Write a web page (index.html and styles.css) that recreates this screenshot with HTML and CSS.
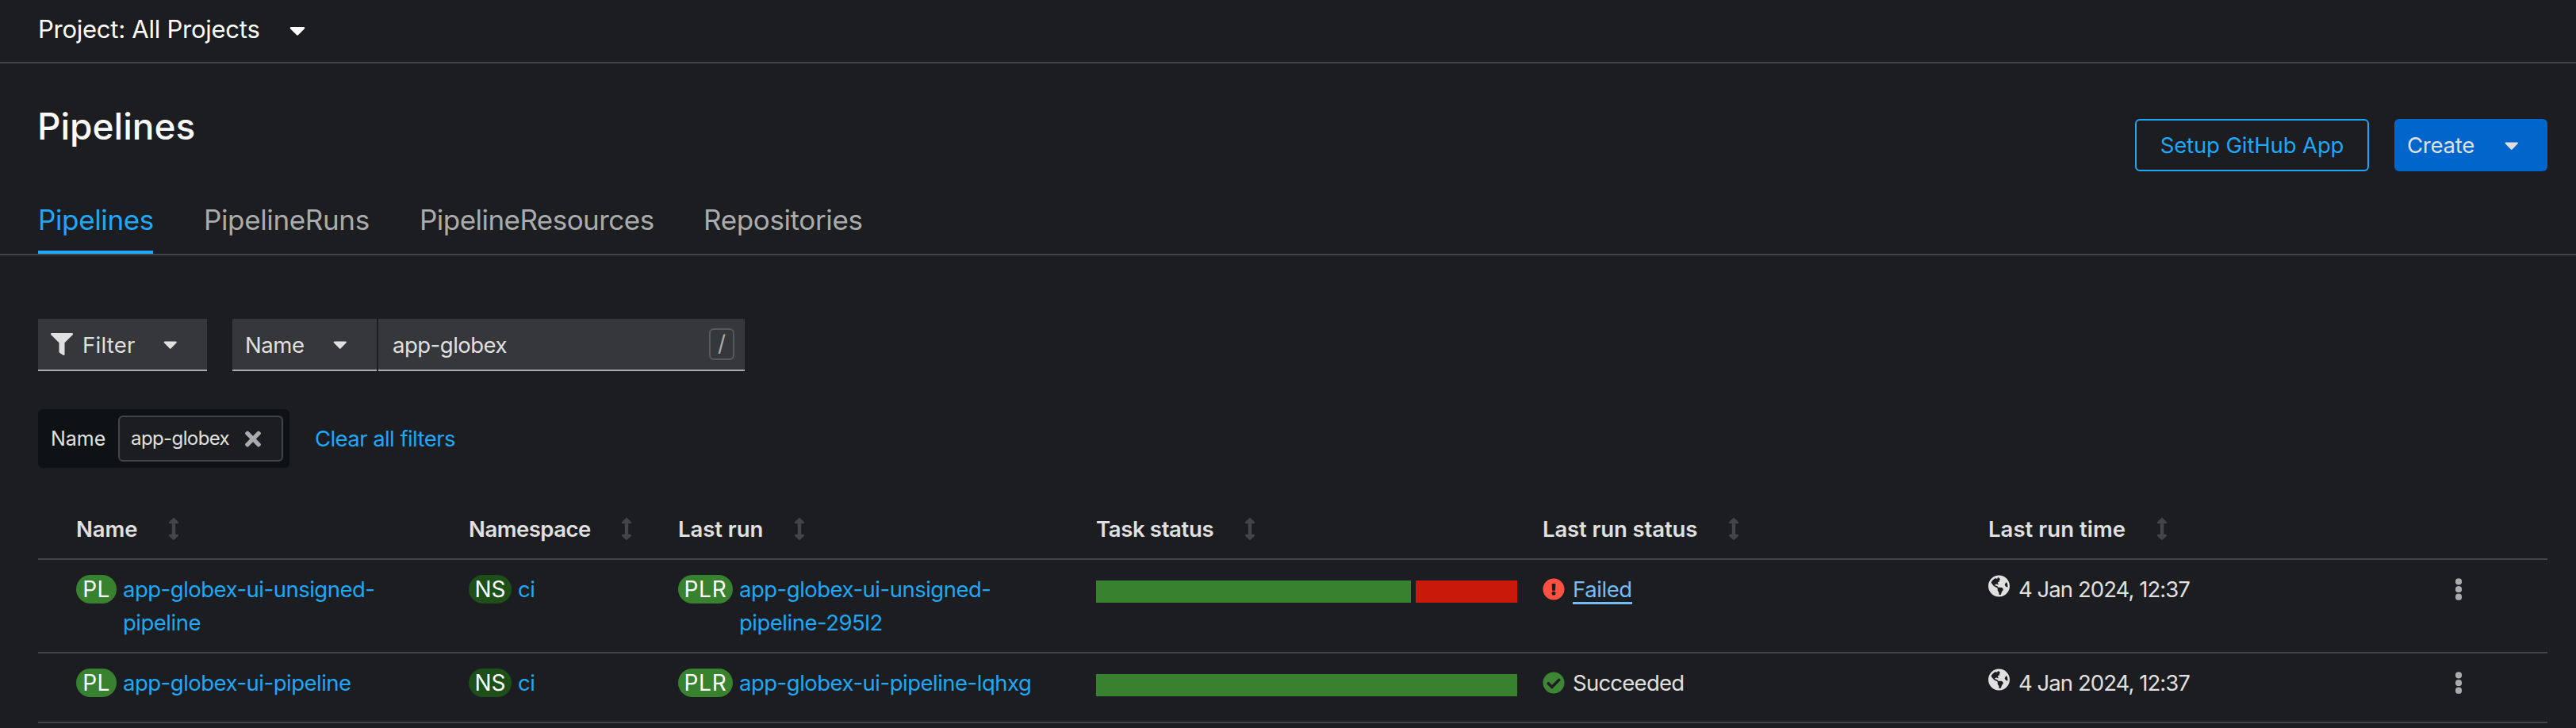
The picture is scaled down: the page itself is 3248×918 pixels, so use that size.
FILE: index.html
```
<!DOCTYPE html>
<html lang="en">
<head>
<meta charset="utf-8">
<title>Pipelines</title>
<link rel="stylesheet" href="styles.css">
</head>
<body>
<svg width="0" height="0" class="sprite" aria-hidden="true">
  <symbol id="caret" viewBox="0 0 320 512"><path d="M31.3 192h257.3c17.8 0 26.7 21.5 14.1 34.1L174.1 354.8c-7.8 7.8-20.5 7.8-28.3 0L17.2 226.1C4.6 213.5 13.5 192 31.3 192z"/></symbol>
  <symbol id="filter" viewBox="0 0 512 512"><path d="M487.976 0H24.028C2.71 0-8.047 25.866 7.058 40.971L192 225.941V432c0 7.831 3.821 15.17 10.237 19.662l80 55.98C298.02 518.69 320 507.493 320 487.98V225.941l184.947-184.97C520.021 25.896 509.338 0 487.976 0z"/></symbol>
  <symbol id="times" viewBox="0 0 352 512"><path d="M242.72 256l100.07-100.07c12.28-12.28 12.28-32.19 0-44.48l-22.24-22.24c-12.28-12.28-32.19-12.28-44.48 0L176 189.28 75.93 89.21c-12.28-12.28-32.19-12.28-44.48 0L9.21 111.45c-12.28 12.28-12.28 32.19 0 44.48L109.28 256 9.21 356.07c-12.28 12.28-12.28 32.19 0 44.48l22.24 22.24c12.28 12.28 32.2 12.28 44.48 0L176 322.72l100.07 100.07c12.28 12.28 32.2 12.28 44.48 0l22.24-22.24c12.28-12.28 12.28-32.19 0-44.48L242.72 256z"/></symbol>
  <symbol id="sort" viewBox="0 0 256 512"><path d="M214.059 377.941H168V134.059h46.059c21.382 0 32.09-25.851 16.971-40.971L144.971 7.029c-9.373-9.373-24.568-9.373-33.941 0L24.971 93.088c-15.119 15.119-4.411 40.971 16.971 40.971H88v243.882H41.941c-21.382 0-32.09 25.851-16.971 40.971l86.059 86.059c9.373 9.373 24.568 9.373 33.941 0l86.059-86.059c15.12-15.119 4.412-40.97-16.97-40.97z"/></symbol>
  <symbol id="failed" viewBox="0 0 512 512"><path d="M504 256c0 136.997-111.043 248-248 248S8 392.997 8 256C8 119.083 119.043 8 256 8s248 111.083 248 248zm-248 50c-25.405 0-46 20.595-46 46s20.595 46 46 46 46-20.595 46-46-20.595-46-46-46zm-43.673-165.346l7.418 136c.347 6.364 5.609 11.346 11.982 11.346h48.546c6.373 0 11.635-4.982 11.982-11.346l7.418-136c.375-6.874-5.098-12.654-11.982-12.654h-63.383c-6.884 0-12.356 5.78-11.981 12.654z"/></symbol>
  <symbol id="ok" viewBox="0 0 512 512"><path d="M504 256c0 136.967-111.033 248-248 248S8 392.967 8 256 119.033 8 256 8s248 111.033 248 248zM227.314 387.314l184-184c6.248-6.248 6.248-16.379 0-22.627l-22.627-22.627c-6.248-6.249-16.379-6.249-22.628 0L216 308.118l-70.059-70.059c-6.248-6.248-16.379-6.248-22.628 0l-22.627 22.627c-6.248 6.248-6.248 16.379 0 22.627l104 104c6.249 6.249 16.379 6.249 22.628.001z"/></symbol>
  <symbol id="globe" viewBox="0 0 496 512"><path d="M248 8C111.03 8 0 119.03 0 256s111.03 248 248 248 248-111.03 248-248S384.97 8 248 8zm82.29 357.6c-3.9 3.88-7.99 7.95-11.31 11.28-2.99 3-5.1 6.7-6.17 10.71-1.51 5.66-2.73 11.38-4.77 16.87l-17.39 46.85c-13.76 3-28 4.69-42.65 4.69v-27.38c1.69-12.62-7.64-36.26-22.63-51.25-6-6-9.37-14.14-9.37-22.63v-32.01c0-11.64-6.27-22.34-16.46-27.97-14.37-7.95-34.81-19.06-48.81-26.11-11.48-5.78-22.1-13.14-31.65-21.75l-.8-.72a114.792 114.792 0 0 1-18.06-20.74c-9.38-13.77-24.66-36.42-34.59-51.14 20.47-45.5 57.36-82.04 103.2-101.89l24.01 12.01C203.48 89.74 216 82.01 216 70.11v-11.3c7.99-1.29 16.12-2.11 24.39-2.42l28.3 28.3c6.25 6.25 6.25 16.38 0 22.63L264 112l-10.34 10.34c-3.12 3.12-3.12 8.19 0 11.31l4.69 4.69c3.12 3.12 3.12 8.19 0 11.31l-8 8a8.008 8.008 0 0 1-5.66 2.34h-8.99c-2.08 0-4.08.81-5.58 2.27l-9.92 9.65a8.008 8.008 0 0 0-1.58 9.31l15.59 31.19c2.66 5.32-1.21 11.58-7.15 11.58h-5.64c-1.93 0-3.79-.7-5.24-1.96l-9.28-8.06a16.017 16.017 0 0 0-15.55-3.1l-31.17 10.39a11.95 11.95 0 0 0-8.17 11.34c0 4.53 2.56 8.66 6.61 10.69l11.08 5.54c9.41 4.71 19.79 7.16 30.31 7.16s22.59 27.29 32 32h66.75c8.49 0 16.62 3.37 22.63 9.37l13.69 13.69a30.503 30.503 0 0 1 8.93 21.57 46.536 46.536 0 0 1-13.72 32.98zM417 274.25c-5.79-1.45-10.84-5-14.15-9.97l-17.98-26.97a23.97 23.97 0 0 1 0-26.62l19.59-29.38c2.32-3.47 5.5-6.29 9.24-8.15l12.98-6.49C440.2 193.59 448 223.87 448 256c0 8.67-.74 17.16-1.82 25.54L417 274.25z"/></symbol>
  <symbol id="kebab" viewBox="0 0 8 28"><circle cx="4" cy="4.3" r="4.1"/><circle cx="4" cy="14" r="4.1"/><circle cx="4" cy="23.7" r="4.1"/></symbol>
</svg>

<header class="project-bar">
  <span class="project-name">Project: All Projects</span>
  <svg class="caret caret-lg"><use href="#caret"/></svg>
</header>

<section class="page-head">
  <div class="title-row">
    <h1 class="title">Pipelines</h1>
    <div class="actions">
      <a class="btn btn-outline">Setup GitHub App</a>
      <a class="btn btn-primary">Create<svg class="caret"><use href="#caret"/></svg></a>
    </div>
  </div>
  <nav class="tabs">
    <a class="tab tab-active">Pipelines</a>
    <a class="tab tab-runs">PipelineRuns</a>
    <a class="tab tab-resources">PipelineResources</a>
    <a class="tab tab-repos">Repositories</a>
  </nav>
</section>

<main class="content">
  <div class="toolbar">
    <div class="field field-filter"><svg class="icon"><use href="#filter"/></svg><span class="filter-label">Filter</span><svg class="caret"><use href="#caret"/></svg></div>
    <div class="field field-name"><span class="name-label">Name</span><svg class="caret"><use href="#caret"/></svg></div>
    <div class="field field-search"><span class="search-text">app-globex</span><kbd class="key">/</kbd></div>
  </div>

  <div class="chips">
    <div class="chip-group">
      <span class="chip-label">Name</span>
      <span class="chip"><span class="chip-text">app-globex</span><svg class="times"><use href="#times"/></svg></span>
    </div>
    <a class="clear">Clear all filters</a>
  </div>

  <div class="table">
    <div class="row row-head">
      <div class="th">Name<svg class="sort"><use href="#sort"/></svg></div>
      <div class="th th-ns">Namespace<svg class="sort"><use href="#sort"/></svg></div>
      <div class="th">Last run<svg class="sort"><use href="#sort"/></svg></div>
      <div class="th th-task">Task status<svg class="sort"><use href="#sort"/></svg></div>
      <div class="th th-status">Last run status<svg class="sort"><use href="#sort"/></svg></div>
      <div class="th th-time">Last run time<svg class="sort"><use href="#sort"/></svg></div>
    </div>
    <div class="row">
      <div class="cell"><span class="badge badge-pl">PL</span><a class="link">app-globex-ui-unsigned-<br>pipeline</a></div>
      <div class="cell"><span class="badge badge-ns">NS</span><a class="link">ci</a></div>
      <div class="cell"><span class="badge badge-plr">PLR</span><a class="link">app-globex-ui-unsigned-<br>pipeline-295l2</a></div>
      <div class="cell"><div class="bar"><span class="seg seg-ok"></span><span class="seg seg-fail"></span></div></div>
      <div class="cell cell-status"><svg class="icon icon-fail"><use href="#failed"/></svg><a class="failed">Failed</a></div>
      <div class="cell cell-time"><svg class="globe"><use href="#globe"/></svg><span class="time">4 Jan 2024, 12:37</span></div>
      <div class="cell cell-menu"><svg class="kebab"><use href="#kebab"/></svg></div>
    </div>
    <div class="row">
      <div class="cell"><span class="badge badge-pl">PL</span><a class="link">app-globex-ui-pipeline</a></div>
      <div class="cell"><span class="badge badge-ns">NS</span><a class="link">ci</a></div>
      <div class="cell"><span class="badge badge-plr">PLR</span><a class="link">app-globex-ui-pipeline-lqhxg</a></div>
      <div class="cell"><div class="bar"><span class="seg seg-full"></span></div></div>
      <div class="cell cell-status"><svg class="icon icon-ok"><use href="#ok"/></svg><span class="succeeded">Succeeded</span></div>
      <div class="cell cell-time"><svg class="globe"><use href="#globe"/></svg><span class="time">4 Jan 2024, 12:37</span></div>
      <div class="cell cell-menu"><svg class="kebab"><use href="#kebab"/></svg></div>
    </div>
  </div>
</main>
</body>
</html>
```
FILE: styles.css
```
* { box-sizing: border-box; }
body {
  margin: 0;
  height: 918px;
  overflow: hidden;
  background: #1c1d21;
  color: #e0e0e0;
  font: 400 27.5px/42px Inter, "Open Sans", sans-serif;
  white-space: nowrap;
}
svg { fill: currentColor; flex: none; display: block; }
.sprite { position: absolute; }
.caret { width: 17.5px; height: 28px; }
.caret-lg { width: 20px; height: 32px; margin-top: 1px; }
.icon { width: 28px; height: 28px; }

.project-bar {
  display: flex;
  align-items: center;
  height: 80px;
  padding: 0 48px 4px 48px;
  border-bottom: 2px solid #444548;
  color: #fff;
  font-size: 31px;
}
.project-name { width: 317px; letter-spacing: -.25px; }

.page-head { border-bottom: 2px solid #444548; padding: 0 36px 0 48px; }
.title-row { display: flex; justify-content: space-between; height: 155px; }
.title {
  margin: 43px 0 0 -1px;
  font-size: 46px;
  font-weight: 500;
  line-height: 72px;
  color: #fafafa;
}
.actions { display: flex; gap: 32px; padding-top: 70px; }
.btn { display: flex; align-items: center; height: 66px; border-radius: 6px; }
.btn-outline {
  width: 295px;
  justify-content: center;
  border: 2px solid #1fa7f8;
  color: #1fa7f8;
  letter-spacing: -.12px;
}
.btn-primary {
  width: 193px;
  padding: 0 37px 0 16px;
  justify-content: space-between;
  background: #06c;
  letter-spacing: -.25px;
}

.tabs { display: flex; gap: 64px; height: 85px; font-size: 35px; line-height: 85px; color: #aaabac; letter-spacing: -.36px; }
.tab { width: 145px; }
.tab-active { color: #1fa7f8; box-shadow: inset 0 -4px #1fa7f8; }
.tab-runs { width: 208px; }
.tab-resources { width: 294px; letter-spacing: -.54px; }

.content { padding: 80px 36px 0 48px; }
.toolbar { display: flex; height: 66px; }
.field {
  display: flex;
  align-items: center;
  background: #36373a;
  border-bottom: 2px solid #aaabac;
}
.field-filter { width: 213px; padding-left: 16px; margin-right: 32px; }
.filter-label { width: 103px; padding: 1px 0 0 12px; letter-spacing: .25px; margin-right: 11px; }
.field-name { width: 182px; padding-left: 16px; margin-right: 2px; }
.name-label { width: 111px; padding-top: 1px; letter-spacing: -.4px; }
.field-search { width: 462px; padding: 0 13px 0 18px; justify-content: space-between; }
.search-text { padding-top: 1px; letter-spacing: -.5px; }
.key {
  width: 32px;
  height: 40px;
  border: 2px solid #57585a;
  border-radius: 6px;
  font: 400 28px/35px Inter, sans-serif;
  text-align: center;
  color: #aaabac;
}

.chips { display: flex; align-items: center; margin-top: 48px; }
.chip-group {
  display: flex;
  align-items: center;
  width: 317px;
  height: 74px;
  padding-left: 16px;
  border-radius: 6px;
  background: #0f1214;
  font-size: 25px;
}
.chip-label { width: 85px; }
.chip {
  display: flex;
  align-items: center;
  width: 208px;
  height: 58px;
  padding-left: 14px;
  border: 2px solid #444548;
  border-radius: 6px;
  background: #1c1d21;
  font-size: 24px;
}
.chip-text { width: 144px; letter-spacing: -.6px; }
.times { width: 20px; height: 29px; color: #aaabac; }
.clear { margin-left: 32px; color: #1fa7f8; letter-spacing: -.57px; }

.table { margin-top: 40px; }
.row {
  display: grid;
  grid-template-columns: 495px 264px 527px 563px 562px 580px 1fr;
  min-height: 88px;
  padding: 16px 0 16px 48px;
  border-bottom: 2px solid #444548;
}
.row-head { height: 76px; min-height: 0; font-weight: 600; }
.th { display: flex; align-items: center; letter-spacing: -.05px; }
.th-ns { letter-spacing: -.5px; }
.th-task { letter-spacing: -.35px; }
.th-status { letter-spacing: -.12px; }
.th-time { letter-spacing: .05px; }
.sort { width: 14px; height: 28px; margin-left: 38.5px; color: #444548; }
.cell { display: flex; align-items: flex-start; }
.badge {
  height: 36px;
  margin: 3px 8px 0 0;
  border-radius: 18px;
  background: #38812f;
  color: #fff;
  font-size: 28px;
  line-height: 36px;
  text-align: center;
}
.badge-pl { width: 51px; letter-spacing: .4px; }
.badge-ns { width: 54px; background: #1e4f18; }
.badge-plr { width: 69px; letter-spacing: .8px; }
.link { color: #1fa7f8; letter-spacing: -.5px; }
.bar { display: flex; gap: 6px; margin-top: 10px; }
.seg { height: 28px; background: #38812f; }
.seg-ok { width: 397px; }
.seg-fail { width: 128px; background: #c9190b; }
.seg-full { width: 531px; }
.cell-status .icon { margin: 7px 10px 0 0; }
.icon-fail { color: #fe5142; }
.icon-ok { color: #3e8635; }
.failed { height: 40px; color: #73bcf7; border-bottom: 3px solid #73bcf7; letter-spacing: -.4px; }
.succeeded { letter-spacing: -.75px; }
.globe { width: 27px; height: 28px; margin: 3px 11px 0 0; }
.time { letter-spacing: -.95px; }
.kebab { width: 8px; height: 28px; margin: 7px 0 0 9px; color: #aaabac; }
```
